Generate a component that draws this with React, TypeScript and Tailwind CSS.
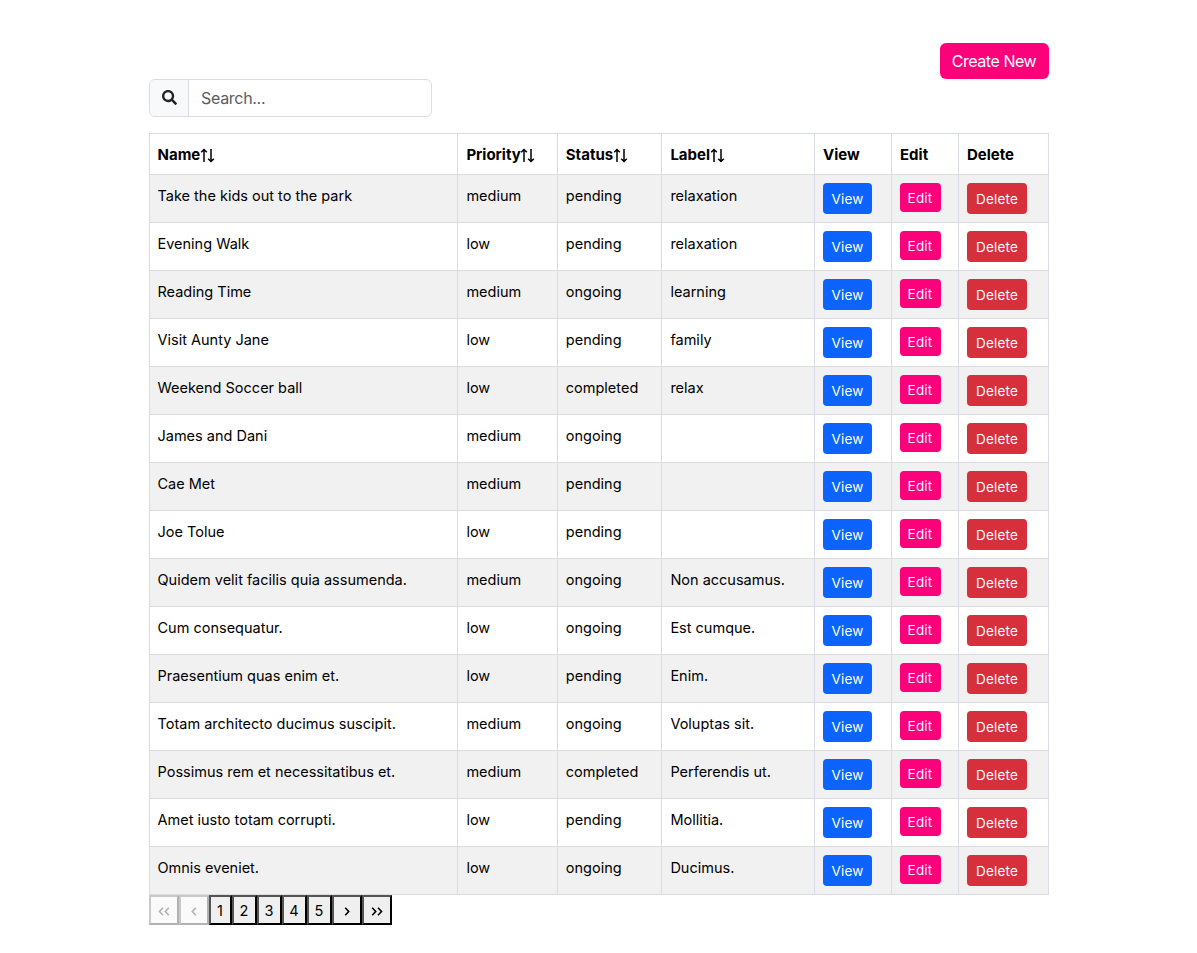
import React from "react";
import { FaSearch } from "react-icons/fa";

type Task = [name: string, priority: string, status: string, label: string];

const tasks: Task[] = [
  ["Take the kids out to the park", "medium", "pending", "relaxation"],
  ["Evening Walk", "low", "pending", "relaxation"],
  ["Reading Time", "medium", "ongoing", "learning"],
  ["Visit Aunty Jane", "low", "pending", "family"],
  ["Weekend Soccer ball", "low", "completed", "relax"],
  ["James and Dani", "medium", "ongoing", ""],
  ["Cae Met", "medium", "pending", ""],
  ["Joe Tolue", "low", "pending", ""],
  ["Quidem velit facilis quia assumenda.", "medium", "ongoing", "Non accusamus."],
  ["Cum consequatur.", "low", "ongoing", "Est cumque."],
  ["Praesentium quas enim et.", "low", "pending", "Enim."],
  ["Totam architecto ducimus suscipit.", "medium", "ongoing", "Voluptas sit."],
  ["Possimus rem et necessitatibus et.", "medium", "completed", "Perferendis ut."],
  ["Amet iusto totam corrupti.", "low", "pending", "Mollitia."],
  ["Omnis eveniet.", "low", "ongoing", "Ducimus."],
];

const textPadding = ["pl-[7.5px]", "pl-[8.4px]", "pl-[7.8px]", "pl-[8.4px]"];

function SortArrows() {
  return (
    <svg className="-ml-[0.5px] inline-block h-[15px] w-[15px] align-[-3px]" viewBox="0 0 15 15" fill="none" stroke="currentColor" strokeWidth="1.5">
      <path d="M4 14V1.5M1.2 4.3L4 1.5l2.8 2.8M11 1v12.5M8.2 10.7l2.8 2.8 2.8-2.8" />
    </svg>
  );
}

const cell = "border border-[#d9dde1] align-top";
const actionText = "text-[13.5px] tracking-[0.2px] text-white";
const pageButton =
  "h-[30px] border-2 border-black bg-[#efefef] pt-px text-[14.5px] leading-[25px] text-black [border-style:outset]";

function Chevron({ double = false, left = false }: { double?: boolean; left?: boolean }) {
  return (
    <svg className={left ? "mx-auto mt-[2px] h-[9px] w-3 -scale-x-100" : "mx-auto mt-[2px] h-[9px] w-3"} viewBox="0 0 12 9" fill="none" stroke="currentColor" strokeWidth="1.6">
      <path d={double ? "M1.2 .8L4.7 4.5 1.2 8.2M7 .8L10.5 4.5 7 8.2" : "M4.2 .8L7.7 4.5 4.2 8.2"} />
    </svg>
  );
}

export default function App() {
  return (
    <div className="h-[953px] bg-white pt-[43px] font-['Inter',sans-serif] text-black">
      <div className="ml-[149px] w-[900px]">
        <div className="flex justify-end">
          <button className="h-9 w-[109px] rounded-md bg-[#ff007a] pr-px text-base leading-9 tracking-[-0.45px] text-white">Create New</button>
        </div>
        <div className="flex h-[38px] w-[283px] overflow-hidden rounded-md border border-[#d9dde1]">
          <div className="flex w-[39px] items-center justify-center border-r border-[#d9dde1] bg-[#f8f9fa] pb-px text-[#212529]">
            <FaSearch size={15} />
          </div>
          <input className="min-w-0 flex-1 px-3 text-base tracking-[-0.3px] outline-none placeholder:text-[#595c5f]" placeholder="Search..." />
        </div>
        <table className="mt-4 w-[900px] table-fixed border-collapse text-left text-[14.5px]">
          <colgroup>
            <col className="w-[308px]" />
            <col className="w-[100px]" />
            <col className="w-[104px]" />
            <col className="w-[153px]" />
            <col className="w-[77px]" />
            <col className="w-[67px]" />
            <col className="w-[90px]" />
          </colgroup>
          <thead>
            <tr className="h-[41px] text-[15px]">
              {["Name", "Priority", "Status", "Label"].map((h, i) => (
                <th key={h} className={`${cell} ${textPadding[i]} whitespace-nowrap pt-[9px] font-bold leading-6`}>
                  {h}
                  <SortArrows />
                </th>
              ))}
              {["View", "Edit", "Delete"].map((h) => (
                <th key={h} className={`${cell} px-2 pt-[9px] font-bold leading-6`}>{h}</th>
              ))}
            </tr>
          </thead>
          <tbody>
            {tasks.map((task) => (
              <tr key={task[0]} className="h-12 odd:bg-[#f1f1f1]">
                {task.map((value, i) => (
                  <td key={i} className={`${cell} ${textPadding[i]} pt-[9px] leading-6`}>{value}</td>
                ))}
                <td className={`${cell} px-2 pt-2`}>
                  <button className={`${actionText} block h-[31px] w-[49px] rounded bg-[#0d63fd] pt-px`}>View</button>
                </td>
                <td className={`${cell} px-2 pt-2`}>
                  <button className={`${actionText} block h-[29px] w-[41px] rounded bg-[#ff007a] pt-px pr-px`}>Edit</button>
                </td>
                <td className={`${cell} px-2 pt-2`}>
                  <button className={`${actionText} block h-[31px] w-[60px] rounded bg-[#d6303c] pt-px`}>Delete</button>
                </td>
              </tr>
            ))}
          </tbody>
        </table>
        <div className="flex">
          <button disabled className={`${pageButton} w-[30px] opacity-30`}><Chevron double left /></button>
          <button disabled className={`${pageButton} w-[30px] opacity-30`}><Chevron left /></button>
          <button className={`${pageButton} w-[23px] pr-px`}>1</button>
          {[2, 3, 4, 5].map((n) => (
            <button key={n} className={`${pageButton} w-[25px] pr-px`}>{n}</button>
          ))}
          <button className={`${pageButton} w-[30px]`}><Chevron /></button>
          <button className={`${pageButton} w-[30px]`}><Chevron double /></button>
        </div>
      </div>
    </div>
  );
}
